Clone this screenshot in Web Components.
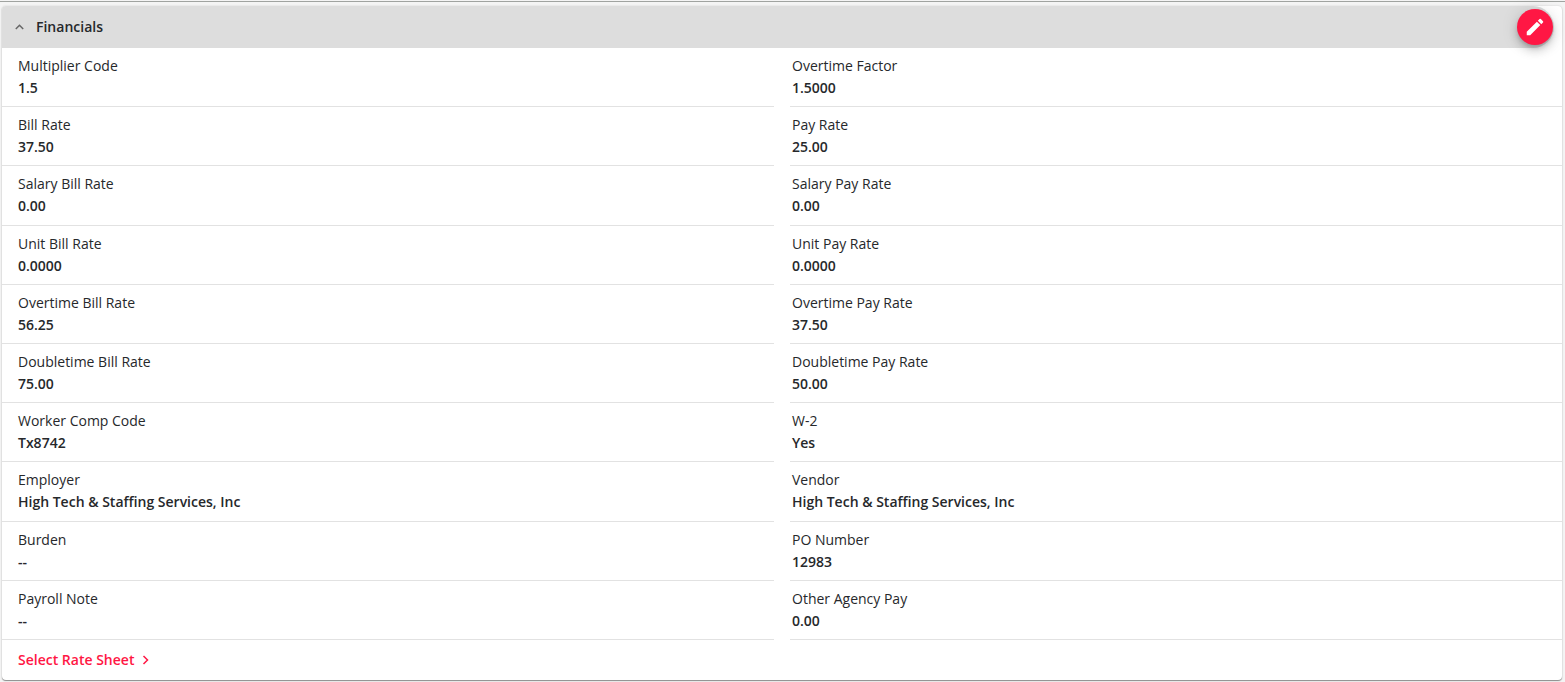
<!DOCTYPE html>
<html lang="en">
<head>
<meta charset="utf-8">
<title>Financials</title>
<style>
  html { height: 100%; }
  body {
    margin: 0;
    min-height: 100%;
    box-sizing: border-box;
    display: flex;
    flex-direction: column;
    padding: 1px 0 2px;
    background: #f4f4f4;
    color: #26282b;
    font: 14px/22px "Open Sans", "Noto Sans", sans-serif;
  }
</style>
</head>
<body>
<page-rule></page-rule>
<detail-card heading="Financials">
  <detail-list>
    <detail-field label="Multiplier Code">1.5</detail-field>
    <detail-field label="Overtime Factor">1.5000</detail-field>
    <detail-field label="Bill Rate">37.50</detail-field>
    <detail-field label="Pay Rate">25.00</detail-field>
    <detail-field label="Salary Bill Rate">0.00</detail-field>
    <detail-field label="Salary Pay Rate">0.00</detail-field>
    <detail-field label="Unit Bill Rate">0.0000</detail-field>
    <detail-field label="Unit Pay Rate">0.0000</detail-field>
    <detail-field label="Overtime Bill Rate">56.25</detail-field>
    <detail-field label="Overtime Pay Rate">37.50</detail-field>
    <detail-field label="Doubletime Bill Rate">75.00</detail-field>
    <detail-field label="Doubletime Pay Rate">50.00</detail-field>
    <detail-field label="Worker Comp Code">Tx8742</detail-field>
    <detail-field label="W-2">Yes</detail-field>
    <detail-field label="Employer">High Tech &amp; Staffing Services, Inc</detail-field>
    <detail-field label="Vendor">High Tech &amp; Staffing Services, Inc</detail-field>
    <detail-field label="Burden">--</detail-field>
    <detail-field label="PO Number">12983</detail-field>
    <detail-field label="Payroll Note">--</detail-field>
    <detail-field label="Other Agency Pay">0.00</detail-field>
  </detail-list>
  <action-link slot="footer">Select Rate Sheet</action-link>
</detail-card>

<script>
class BaseElement extends HTMLElement {
  connectedCallback() {
    if (this.shadowRoot) return;
    this.attachShadow({ mode: "open" }).innerHTML = this.render();
  }
}

/* Divider above the card */
customElements.define("page-rule", class extends BaseElement {
  render() {
    return `<style>
      :host { display: block; height: 4px; border-top: 1px solid #a0a3a0; flex: none; }
    </style>`;
  }
});

customElements.define("detail-card", class extends BaseElement {
  render() {
    return `<style>
      :host {
        display: flex; flex-direction: column; flex: 1;
        margin: 0 3px 0 2px;
        border-radius: 4px;
        background: #fff;
        box-shadow: 0 1px 1px #8c8c8c, 0 0 2px #ccc;
      }
      header {
        display: flex; align-items: center; justify-content: space-between;
        height: 42px; flex: none;
        margin-right: 8px;
        padding-right: 1px;
        background: #ddd;
        border-radius: 4px 21px 21px 0;
      }
      button { border: 0; padding: 0; font: inherit; color: inherit; cursor: pointer; }
      .toggle { display: flex; align-items: center; gap: 11px; padding-left: 12px; background: none; }
      h2 { margin: 0; font-size: 14px; font-weight: 600; line-height: 22px; }
      svg { display: block; }
      .edit {
        display: grid; place-items: center;
        width: 36px; height: 36px; border-radius: 50%;
        background: #ff1744; color: #fff;
        box-shadow: 0 3px 5px -1px rgba(0,0,0,.2), 0 6px 10px rgba(0,0,0,.14), 0 1px 18px rgba(0,0,0,.12);
      }
      main { display: flex; flex: 1; }
      footer { display: flex; align-items: center; height: 40px; flex: none; padding: 0 16px; }
    </style>
    <header>
      <button class="toggle" type="button" aria-expanded="true">
        <svg width="11" height="10" viewBox="0 0 11 10" fill="none" stroke="#666" stroke-width="1.5"><path d="M1.8 7 5.5 3.3 9.2 7"/></svg>
        <h2>${this.getAttribute("heading")}</h2>
      </button>
      <button class="edit" type="button" aria-label="Edit">
        <svg width="22" height="22" viewBox="0 0 24 24" fill="currentColor"><path d="M3 17.25V21h3.75L17.81 9.94l-3.75-3.75L3 17.25zM20.71 7.04a1 1 0 0 0 0-1.41l-2.34-2.34a1 1 0 0 0-1.41 0l-1.83 1.83 3.75 3.75 1.83-1.83z"/></svg>
      </button>
    </header>
    <main><slot></slot></main>
    <footer><slot name="footer"></slot></footer>`;
  }
});

customElements.define("detail-list", class extends BaseElement {
  render() {
    return `<style>
      :host {
        display: grid; flex: 1;
        grid-template-columns: 1fr 1fr;
        grid-auto-rows: 1fr;
        column-gap: 16px;
      }
      ::slotted(:nth-child(odd)) { --field-inset: 16px; }
      ::slotted(:nth-child(even)) { --field-inset: 2px; }
    </style><slot></slot>`;
  }
});

customElements.define("detail-field", class extends BaseElement {
  render() {
    return `<style>
      :host {
        display: block;
        padding: 7px 16px 7px var(--field-inset, 16px);
        border-bottom: 1px solid #e2e2e2;
      }
      dl, dd { margin: 0; }
      dd { font-weight: 600; }
    </style>
    <dl><dt>${this.getAttribute("label")}</dt><dd><slot></slot></dd></dl>`;
  }
});

customElements.define("action-link", class extends BaseElement {
  render() {
    return `<style>
      :host { display: block; }
      a { display: flex; align-items: center; gap: 6px; color: #ff1744; font-weight: 600; text-decoration: none; }
    </style>
    <a href="#rate-sheet"><slot></slot>
      <svg width="12" height="12" viewBox="0 0 12 12" fill="none" stroke="currentColor" stroke-width="1.5"><path d="M3.5 2 7.5 6 3.5 10"/></svg>
    </a>`;
  }
});
</script>
</body>
</html>
